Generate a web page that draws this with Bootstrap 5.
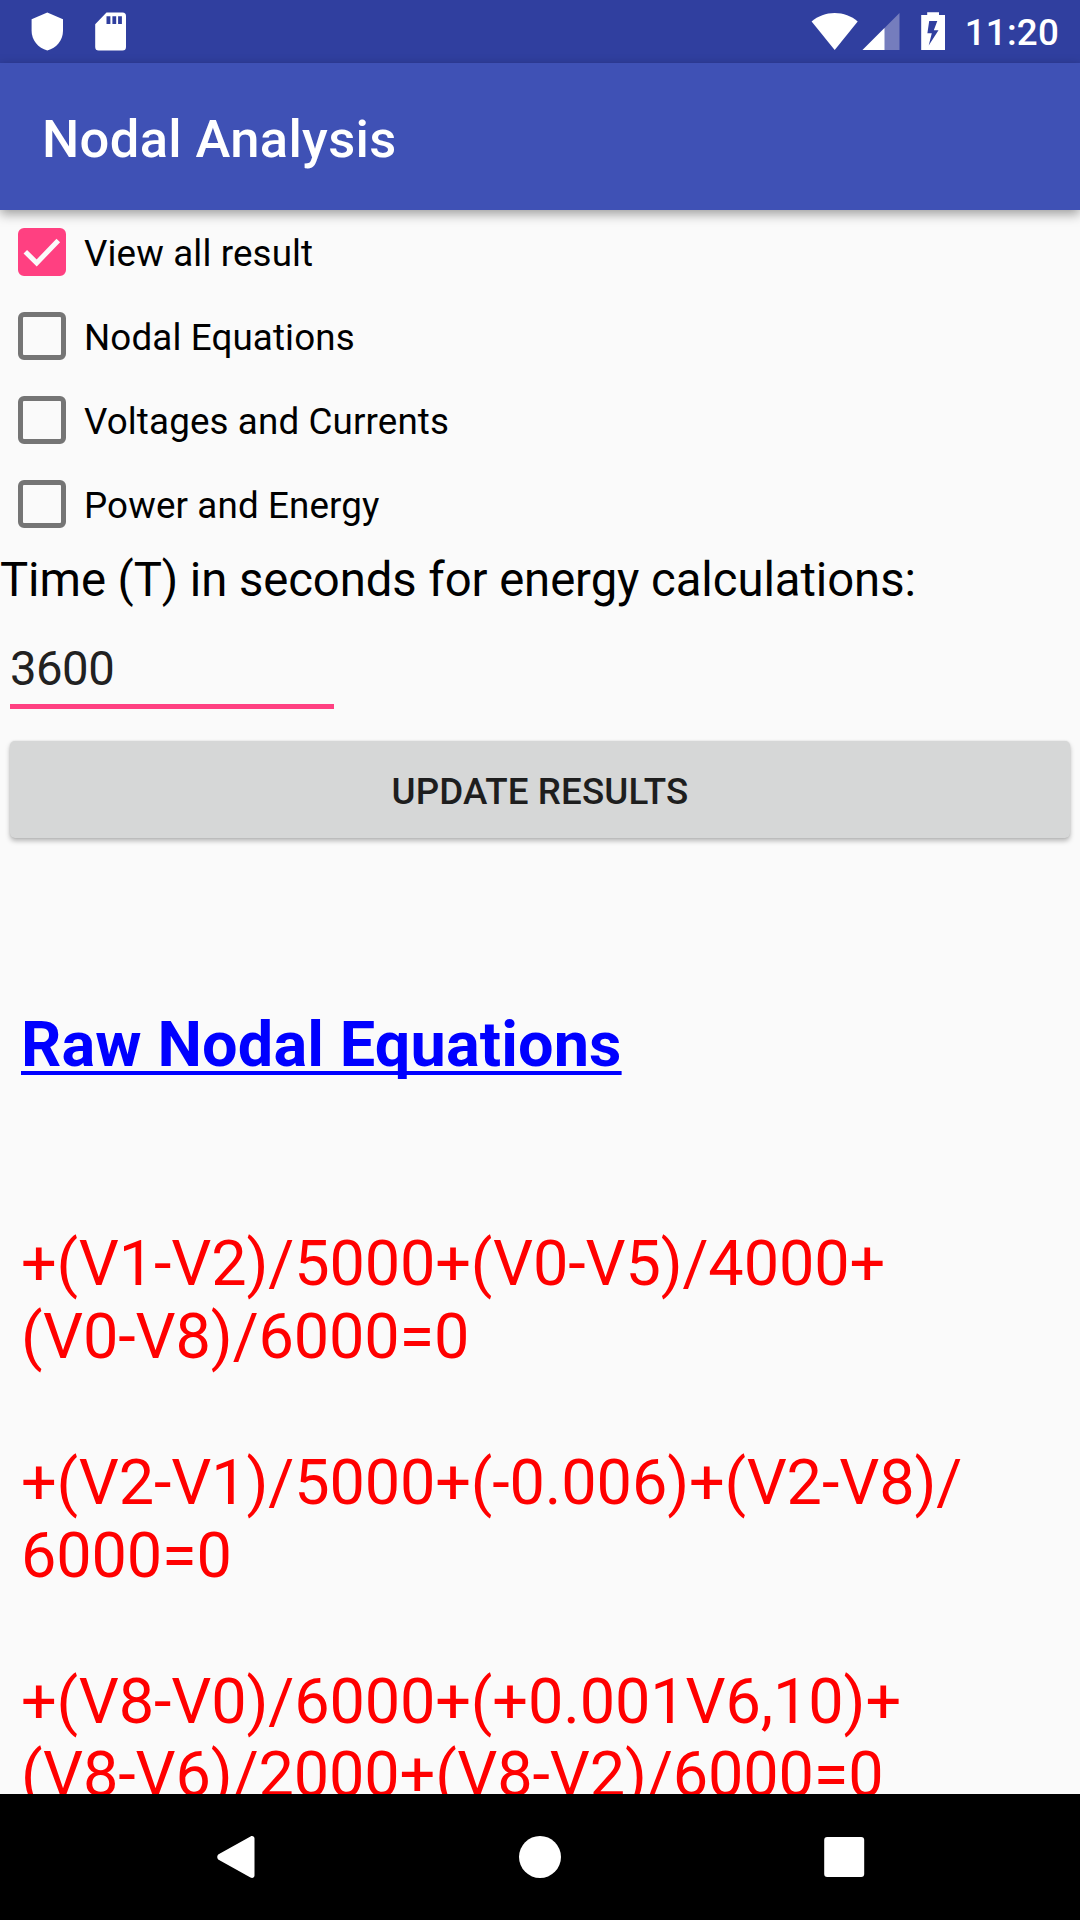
<!DOCTYPE html>
<html lang="en">
<head>
<meta charset="utf-8">
<meta name="viewport" content="width=device-width, initial-scale=1">
<title>Nodal Analysis</title>
<link href="https://cdn.jsdelivr.net/npm/bootstrap@5.3.0/dist/css/bootstrap.min.css" rel="stylesheet">
<style>
  body { font-family: Roboto, sans-serif; background: #fafafa; color: #000; width: 1080px; height: 1920px; }
  svg { display: block; flex: none; }
  .status-bar { height: 63px; background: #303f9f; padding: 0 21px 0 31px; }
  .sd-icon { margin-left: 31px; }
  .signal-icon { margin-left: 4px; }
  .battery-icon { margin-left: 21px; }
  .status-clock { font-size: 36.75px; font-weight: 500; line-height: 63px; padding-top: 2px; margin-left: 20px; letter-spacing: .2px; }
  .app-bar { height: 147px; background: #3f51b5; padding: 5px 42px 0; box-shadow: 0 4px 11px rgba(0,0,0,.38); z-index: 1; }
  .app-title { font-size: 52.5px; font-weight: 500; line-height: 142px; letter-spacing: .35px; }
  .option-row { height: 84px; padding-left: 18px; }
  .option-row .form-check-input { width: 48px; height: 48px; margin: 0; border: 5.5px solid #757575; border-radius: 6px; background-color: transparent; flex: none; }
  .option-row .form-check-input:checked { border-color: #ff4081; background-color: #ff4081; background-origin: border-box; background-size: 48px 48px;
    background-image: url("data:image/svg+xml,%3Csvg xmlns='http://www.w3.org/2000/svg' viewBox='0 0 48 48'%3E%3Cpath d='M7.3 23.7 18.7 35 40.3 12.4' fill='none' stroke='%23fafafa' stroke-width='5'/%3E%3C/svg%3E"); }
  .option-row label { font-size: 36.75px; line-height: 81px; padding: 3px 0 0 18px; letter-spacing: .13px; }
  .time-label { font-size: 47.25px; line-height: 56px; padding-top: 6px; letter-spacing: -.07px; }
  .time-input { width: 324px; height: 70px; margin: 31px 0 0 10px; padding: 0 0 6px; font-size: 47.25px; line-height: 56px; letter-spacing: -.5px; color: #212121; background: transparent; border: 0; border-bottom: 5.5px solid #ff4081; border-radius: 0; }
  .update-btn { height: 97px; margin: 32px 10px 0; font-size: 36.75px; font-weight: 500; line-height: 1; letter-spacing: .1px; padding: 5px 0 0; color: #1e1e1e; background: #d6d7d7; border: 0; border-radius: 5px; box-shadow: 0 3px 5px rgba(0,0,0,.27), 0 0 2px rgba(0,0,0,.12); }
  .results { padding: 170px 21px 0; font-size: 63px; line-height: 73px; letter-spacing: -.13px; color: #f00; white-space: nowrap; min-height: 0; }
  .results h2 { font-size: 63px; font-weight: 700; line-height: 73px; letter-spacing: .13px; margin: 0 0 146px; color: #00f; text-decoration: underline; text-decoration-thickness: 4px; text-underline-offset: 5px; text-decoration-skip-ink: none; }
  .results p { margin: 0 0 73px; }
  .nav-keys { height: 126px; background: #000; padding: 0 215px; }
</style>
</head>
<body class="d-flex flex-column overflow-hidden">
  <div class="status-bar d-flex align-items-center text-white flex-shrink-0">
    <svg width="33" height="63" viewBox="0 0 33 63" fill="#fff"><path d="M16.3 12.500 32 19.200V31c0 8.600-6.500 17.500-15.700 19.400C7.200 48.500.6 39.600.6 31V19.200z"/></svg>
    <svg class="sd-icon" width="32" height="63" viewBox="0 0 32 63"><path fill="#fff" fill-rule="evenodd" d="M11.500 12.500H27.500a3.500 3.500 0 0 1 3.500 3.500V47a3.500 3.500 0 0 1-3.500 3.500H3.700A3.500 3.500 0 0 1 .2 47V24.200zM11.500 16.300V24h3.900v-7.700zm5.900 0V24h3.800v-7.700zm5.700 0V24h3.800v-7.700z"/></svg>
    <svg class="ms-auto" width="47" height="63" viewBox="0 0 47 63" fill="#fff"><path d="M.6 21.500C7 16 15 13 23.700 13s16.700 3 23 8.500L23.700 50z"/></svg>
    <svg class="signal-icon" width="38" height="63" viewBox="0 0 38 63"><path d="M37.500 13v37H.5z" fill="#757dbd"/><path d="M22.500 28v22H.5z" fill="#fff"/></svg>
    <svg class="battery-icon" width="24" height="63" viewBox="0 0 24 63"><path fill="#fff" fill-rule="evenodd" d="M6.200 12.300H18V15h6v35H.2V15h6zM8.200 21 6.400 33.300h4.400L7.700 45.500 17.500 30.200h-4.700L16.300 21z"/></svg>
    <div class="status-clock">11:20</div>
  </div>
  <header class="app-bar position-relative text-white flex-shrink-0">
    <div class="app-title">Nodal Analysis</div>
  </header>
  <main class="d-flex flex-column flex-grow-1 overflow-hidden">
    <div class="option-row d-flex align-items-center flex-shrink-0"><input class="form-check-input" type="checkbox" id="optAll" checked><label for="optAll">View all result</label></div>
    <div class="option-row d-flex align-items-center flex-shrink-0"><input class="form-check-input" type="checkbox" id="optNodal"><label for="optNodal">Nodal Equations</label></div>
    <div class="option-row d-flex align-items-center flex-shrink-0"><input class="form-check-input" type="checkbox" id="optVolt"><label for="optVolt">Voltages and Currents</label></div>
    <div class="option-row d-flex align-items-center flex-shrink-0"><input class="form-check-input" type="checkbox" id="optPower"><label for="optPower">Power and Energy</label></div>
    <label class="time-label flex-shrink-0" for="timeSeconds">Time (T) in seconds for energy calculations:</label>
    <input class="time-input flex-shrink-0" type="text" id="timeSeconds" value="3600">
    <button class="btn update-btn flex-shrink-0" type="button">UPDATE RESULTS</button>
    <section class="results flex-grow-1 overflow-hidden">
      <h2>Raw Nodal Equations</h2>
      <p>+(V1-V2)/5000+(V0-V5)/4000+<br>(V0-V8)/6000=0</p>
      <p>+(V2-V1)/5000+(-0.006)+(V2-V8)/<br>6000=0</p>
      <p>+(V8-V0)/6000+(+0.001V6,10)+<br>(V8-V6)/2000+(V8-V2)/6000=0</p>
    </section>
  </main>
  <nav class="nav-keys d-flex align-items-center justify-content-between flex-shrink-0">
    <svg width="42" height="42" viewBox="0 0 42 42" fill="#fff"><path d="M3.600 18.300 35.500.4C37.500-.5 39.500.4 39.500 2.500v37c0 2.100-2 3-4 2.100L3.600 23.700c-1.800-1-1.800-4.400 0-5.400z"/></svg>
    <svg width="42" height="42" viewBox="0 0 42 42" fill="#fff"><circle cx="21" cy="21" r="21"/></svg>
    <svg width="42" height="42" viewBox="0 0 42 42" fill="#fff"><rect x="1.200" y="1" width="40" height="40" rx="3"/></svg>
  </nav>
<script src="https://cdn.jsdelivr.net/npm/bootstrap@5.3.0/dist/js/bootstrap.bundle.min.js"></script>
</body>
</html>
